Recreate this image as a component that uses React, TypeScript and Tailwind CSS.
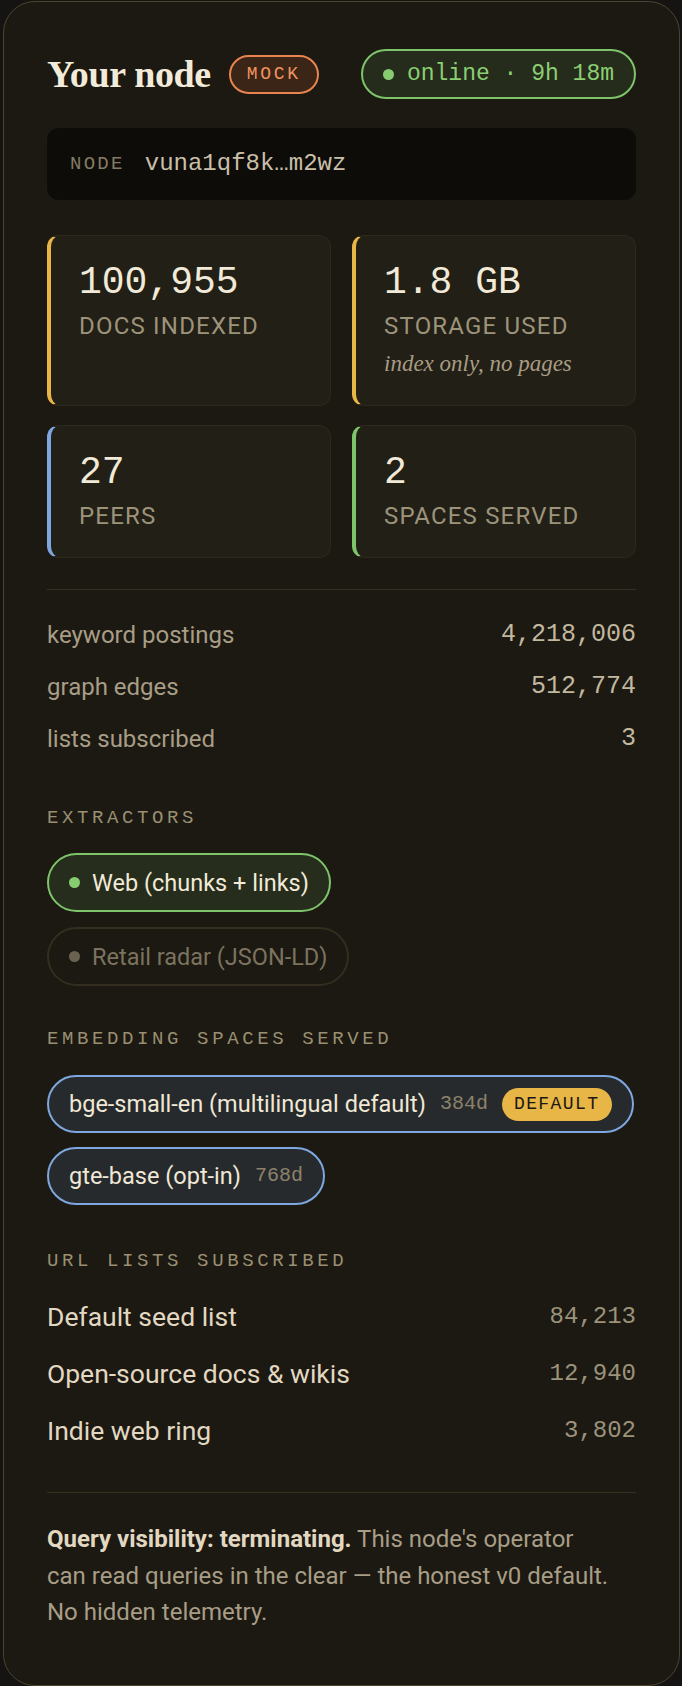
import React from 'react';

const SANS = 'font-[Roboto,"Liberation_Sans",sans-serif]';
const MONO = 'font-["Liberation_Mono",monospace]';
const SERIF = 'font-["Liberation_Serif",serif]';

type Stat = { value: string; label: string; accent: string; note?: string };

const STATS: Stat[] = [
  { value: '100,955', label: 'Docs indexed', accent: 'border-l-[#e8b547]' },
  { value: '1.8 GB', label: 'Storage used', accent: 'border-l-[#e8b547]', note: 'index only, no pages' },
  { value: '27', label: 'Peers', accent: 'border-l-[#7ea6df]' },
  { value: '2', label: 'Spaces served', accent: 'border-l-[#7ec46a]' },
];

const COUNTS = [
  ['keyword postings', '4,218,006'],
  ['graph edges', '512,774'],
  ['lists subscribed', '3'],
];

const LISTS = [
  ['Default seed list', '84,213'],
  ['Open-source docs & wikis', '12,940'],
  ['Indie web ring', '3,802'],
];

function StatCard({ stat }: { stat: Stat }) {
  return (
    <div
      className={`rounded-xl border border-[#2d291d] border-l-4 ${stat.accent} bg-[#221f16] pl-7 pr-4 pt-6 pb-[27px]`}
    >
      <div className={`${MONO} text-[38px] leading-[46px] text-[#f2ead8]`}>{stat.value}</div>
      <div className={`${SANS} mt-1.5 text-[24px] leading-[28px] uppercase tracking-[0.05em] text-[#9d937b]`}>
        {stat.label}
      </div>
      {stat.note && (
        <div className={`${SERIF} mt-[10px] text-[23px] leading-[28px] italic text-[#a89c84]`}>{stat.note}</div>
      )}
    </div>
  );
}

function SectionTitle({ children }: { children: React.ReactNode }) {
  return (
    <div className={`${MONO} text-[19px] leading-[26px] uppercase tracking-[0.19em] text-[#9a8f72]`}>{children}</div>
  );
}

export default function App() {
  return (
    <div className="min-h-screen bg-[#151412] pl-[3px] pr-[2px] pt-px pb-[3px]">
      <div className="rounded-[32px] border border-[#4b4430] bg-[#1b1911] px-[43px] pt-[47px] pb-[54px]">
        {/* header */}
        <div className="flex items-center justify-between">
          <div className="flex items-center gap-[18px]">
            <h1 className={`${SERIF} text-[38px] font-bold leading-[44px] tracking-[-0.01em] text-[#f3ebd9]`}>
              Your node
            </h1>
            <span
              className={`${MONO} rounded-full border-2 border-[#e8844f] bg-[#3b2517] px-4 py-1.5 text-[18px] leading-[23px] tracking-[0.15em] text-[#f0935f]`}
            >
              MOCK
            </span>
          </div>
          <div className="flex items-center gap-[13px] rounded-full border-2 border-[#7ec46a] bg-[#252c1c] px-5 py-2.5">
            <span className="h-[11px] w-[11px] rounded-full bg-[#86cc70]" />
            <span className={`${MONO} text-[23px] leading-[26px] text-[#8ccf73]`}>online · 9h 18m</span>
          </div>
        </div>

        {/* node id */}
        <div className="mt-[29px] flex h-[72px] items-center gap-[20px] rounded-xl bg-[#0d0c09] px-[23px]">
          <span className={`${MONO} text-[19px] tracking-[0.12em] text-[#857b64]`}>NODE</span>
          <span className={`${MONO} text-[24px] text-[#c9bfa8]`}>vuna1qf8k…m2wz</span>
        </div>

        {/* stats grid */}
        <div className="mt-[35px] grid grid-cols-2 gap-x-[21px] gap-y-[19px]">
          {STATS.map((s) => (
            <StatCard key={s.label} stat={s} />
          ))}
        </div>

        <div className="mt-[31px] border-t border-[#35301f]" />

        <div className="mt-[19px]">
          {COUNTS.map(([k, v]) => (
            <div key={k} className="flex items-center justify-between py-3">
              <span className={`${SANS} text-[24px] leading-[28px] text-[#a89d86]`}>{k}</span>
              <span className={`${MONO} text-[25px] leading-[28px] text-[#c2b79f]`}>{v}</span>
            </div>
          ))}
        </div>

        {/* extractors */}
        <div className="mt-[40px]">
          <SectionTitle>Extractors</SectionTitle>
          <div className="mt-[22px] flex flex-wrap gap-[15px]">
            <div className="flex items-center gap-3 rounded-full border-2 border-[#7ec46a] bg-[#262d1c] px-5 py-[13.5px]">
              <span className="h-[11px] w-[11px] rounded-full bg-[#86cc70]" />
              <span className={`${SANS} text-[23.5px] leading-[28px] text-[#f2ead8]`}>Web (chunks + links)</span>
            </div>
            <div className="flex items-center gap-3 rounded-full border-2 border-[#332e1f] px-5 py-[13.5px]">
              <span className="h-[11px] w-[11px] rounded-full bg-[#6b6350]" />
              <span className={`${SANS} text-[23.5px] leading-[28px] text-[#7b735f]`}>Retail radar (JSON-LD)</span>
            </div>
          </div>
        </div>

        {/* embedding spaces */}
        <div className="mt-10">
          <SectionTitle>Embedding spaces served</SectionTitle>
          <div className="mt-[23px] flex flex-wrap gap-[14px]">
            <div className="flex items-center gap-[14px] rounded-full border-2 border-[#7ea6df] bg-[#262a2c] pl-5 pr-5 py-[10.5px]">
              <span className={`${SANS} text-[23.5px] leading-[28px] text-[#f0e8d6]`}>
                bge-small-en (multilingual default)
              </span>
              <span className={`${MONO} text-[20px] leading-[28px] text-[#8c826b]`}>384d</span>
              <span
                className={`${MONO} rounded-full bg-[#e8b547] px-3 py-[5px] text-[18px] leading-[23px] tracking-[0.08em] text-[#1c1810]`}
              >
                DEFAULT
              </span>
            </div>
            <div className="flex items-center gap-[14px] rounded-full border-2 border-[#7ea6df] bg-[#262a2c] px-5 py-[13px]">
              <span className={`${SANS} text-[23.5px] leading-[28px] text-[#f0e8d6]`}>gte-base (opt-in)</span>
              <span className={`${MONO} text-[20px] leading-[28px] text-[#8c826b]`}>768d</span>
            </div>
          </div>
        </div>

        {/* url lists */}
        <div className="mt-[43px]">
          <SectionTitle>URL lists subscribed</SectionTitle>
          <div className="mt-[14px]">
            {LISTS.map(([k, v]) => (
              <div key={k} className="flex items-center justify-between py-[13.5px]">
                <span className={`${SANS} text-[26.5px] leading-[30px] text-[#e2d8c2]`}>{k}</span>
                <span className={`${MONO} text-[24px] leading-[30px] text-[#9c927b]`}>{v}</span>
              </div>
            ))}
          </div>
        </div>

        <div className="mt-[33px] border-t border-[#35301f]" />

        <p className={`${SANS} mt-[28px] text-[24px] leading-[36.5px] text-[#a89d86]`}>
          <strong className="font-bold text-[#e2d8c2]">Query visibility: terminating.</strong> This node's operator
          <br />
          can read queries in the clear — the honest v0 default.
          <br />
          No hidden telemetry.
        </p>
      </div>
    </div>
  );
}
